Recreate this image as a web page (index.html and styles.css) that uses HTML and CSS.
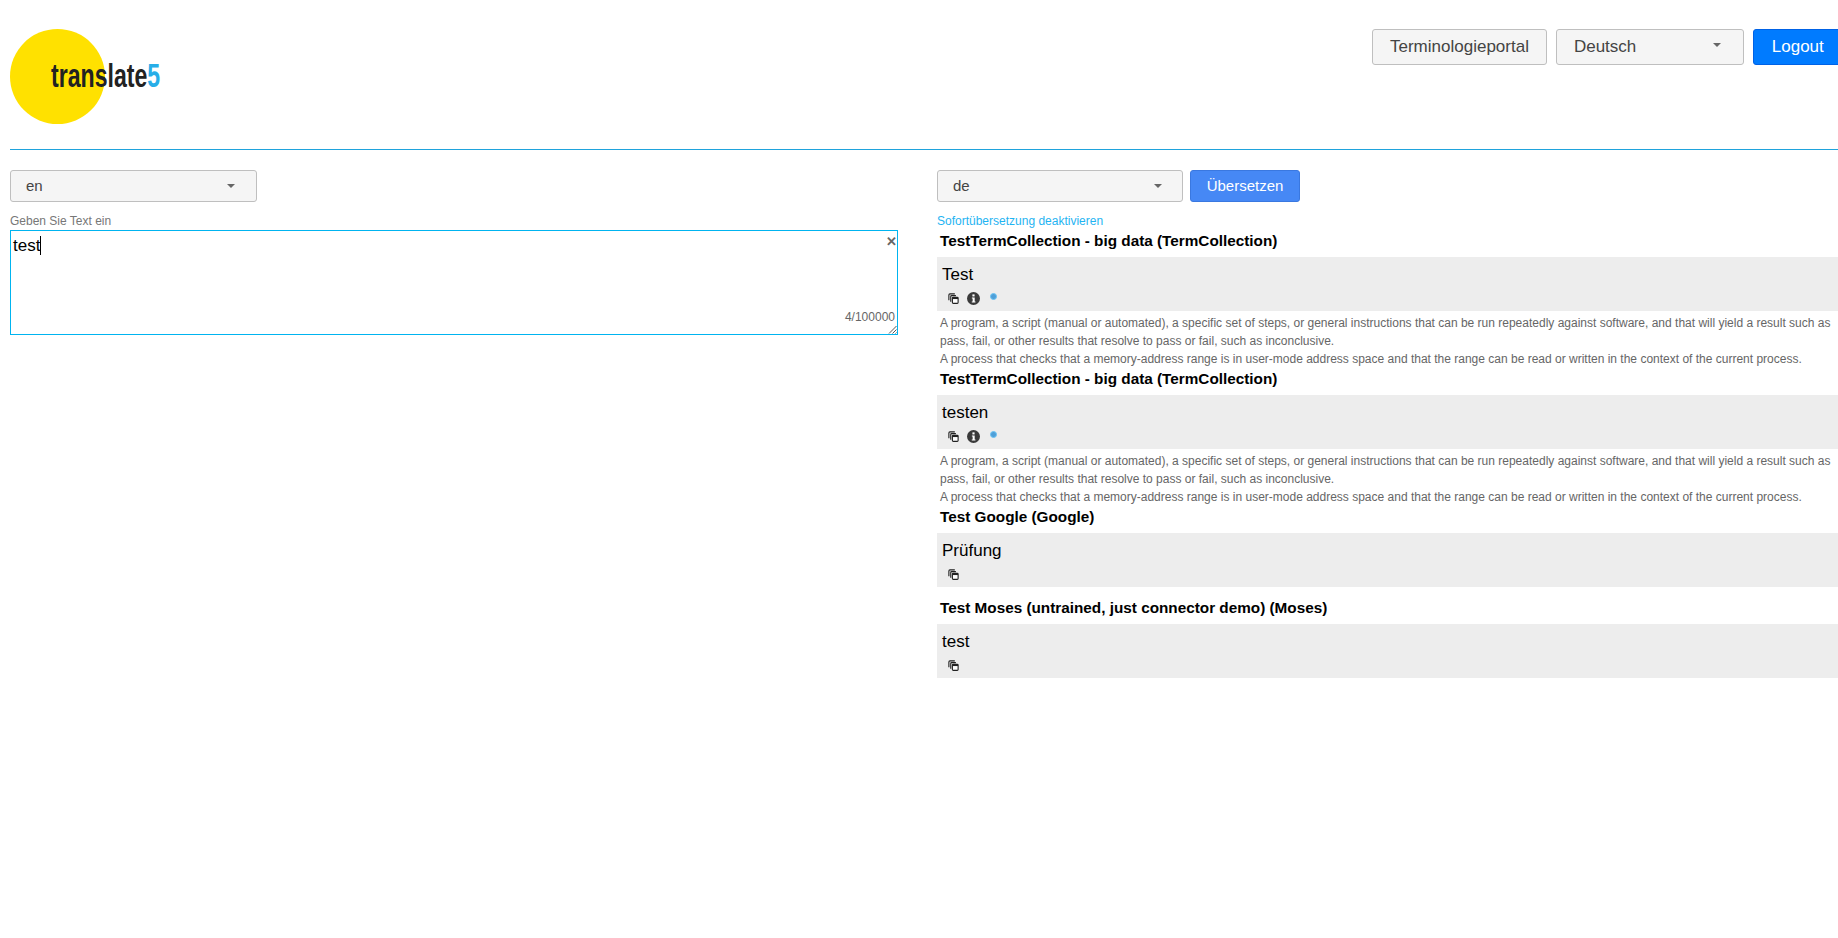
FILE: index.html
```html
<!DOCTYPE html>
<html lang="de">
<head>
<meta charset="utf-8">
<title>translate5</title>
<link rel="stylesheet" href="styles.css">
</head>
<body>
<svg class="defs" width="0" height="0" aria-hidden="true">
  <symbol id="copy" viewBox="0 0 10 10">
    <path d="M.8 6.6V1.8C.8 1.2 1.2.8 1.8.8h4.4" fill="none" stroke="#222" stroke-width="1"/>
    <path d="M2.5 8V3.2c0-.5.3-.8.8-.8h3.9" fill="none" stroke="#222" stroke-width="1"/>
    <rect x="4" y="4" width="5.2" height="5.4" rx=".8" fill="#fff" stroke="#222" stroke-width="1"/>
    <rect x="4" y="4" width="5.2" height="1.5" fill="#222"/>
  </symbol>
  <symbol id="info" viewBox="0 0 12 12">
    <circle cx="6" cy="6" r="6" fill="#3a3a3a"/>
    <rect x="5" y="2.2" width="2" height="1.9" fill="#fff"/>
    <path d="M4.5 5h2.6v3.7h.7v1H4.4v-1h.8V6h-.7z" fill="#fff"/>
  </symbol>
</svg>
<header class="top">
  <div class="logo">
    <span class="logo-circle"></span>
    <span class="logo-text">translate<span class="logo-five">5</span></span>
  </div>
  <nav class="top-actions">
    <button class="btn btn-plain btn-large">Terminologieportal</button>
    <button class="btn btn-plain btn-large select-lang"><span>Deutsch</span><i class="caret"></i></button>
    <button class="btn btn-primary btn-large">Logout</button>
  </nav>
</header>
<main class="columns">
  <section class="col-left">
    <button class="btn btn-plain select-small"><span>en</span><i class="caret"></i></button>
    <div class="hint">Geben Sie Text ein</div>
    <div class="source">
      <div class="source-text">test<span class="cursor"></span></div>
      <span class="clear">✕</span>
      <span class="counter">4/100000</span>
      <svg class="grip" width="9" height="9" viewBox="0 0 9 9"><path d="M1 8.5 8.5 1M4.5 8.5l4-4M7.5 8.5l1-1" stroke="#555" stroke-width="1" fill="none"/></svg>
    </div>
  </section>
  <section class="col-right">
    <div class="target-bar">
      <button class="btn btn-plain select-small select-target"><span>de</span><i class="caret"></i></button>
      <button class="btn btn-translate">Übersetzen</button>
    </div>
    <a class="instant">Sofortübersetzung deaktivieren</a>
    <div class="result">
      <h3 class="res-title">TestTermCollection - big data (TermCollection)</h3>
      <div class="res-box">
        <div class="res-term">Test</div>
        <div class="res-icons"><svg class="ic-copy"><use href="#copy"/></svg><svg class="ic-info"><use href="#info"/></svg><span class="ic-dot"></span></div>
      </div>
      <p class="res-desc">A program, a script (manual or automated), a specific set of steps, or general instructions that can be run repeatedly against software, and that will yield a result such as pass, fail, or other results that resolve to pass or fail, such as inconclusive.<br>A process that checks that a memory-address range is in user-mode address space and that the range can be read or written in the context of the current process.</p>
    </div>
    <div class="result">
      <h3 class="res-title">TestTermCollection - big data (TermCollection)</h3>
      <div class="res-box">
        <div class="res-term">testen</div>
        <div class="res-icons"><svg class="ic-copy"><use href="#copy"/></svg><svg class="ic-info"><use href="#info"/></svg><span class="ic-dot"></span></div>
      </div>
      <p class="res-desc">A program, a script (manual or automated), a specific set of steps, or general instructions that can be run repeatedly against software, and that will yield a result such as pass, fail, or other results that resolve to pass or fail, such as inconclusive.<br>A process that checks that a memory-address range is in user-mode address space and that the range can be read or written in the context of the current process.</p>
    </div>
    <div class="result">
      <h3 class="res-title">Test Google (Google)</h3>
      <div class="res-box">
        <div class="res-term">Prüfung</div>
        <div class="res-icons"><svg class="ic-copy"><use href="#copy"/></svg></div>
      </div>
    </div>
    <div class="result spaced">
      <h3 class="res-title">Test Moses (untrained, just connector demo) (Moses)</h3>
      <div class="res-box">
        <div class="res-term">test</div>
        <div class="res-icons"><svg class="ic-copy"><use href="#copy"/></svg></div>
      </div>
    </div>
  </section>
</main>
</body>
</html>
```
FILE: styles.css
```css
* { box-sizing: border-box; }
html, body { height: 100%; }
body {
  margin: 0;
  padding: 0 0 0 10px;
  width: 1838px;
  overflow: hidden;
  background: #fff;
  font-family: "Liberation Sans", Arial, sans-serif;
  color: #000;
}
.defs { display: block; height: 0; }
.top {
  width: 1860px;
  height: 150px;
  padding-top: 29px;
  border-bottom: 1px solid #1fa3dc;
  display: flex;
  justify-content: space-between;
  align-items: flex-start;
}
.logo { position: relative; width: 160px; height: 95px; }
.logo-circle {
  display: block;
  width: 95px;
  height: 95px;
  border-radius: 50%;
  background: #ffe100;
}
.logo-text {
  position: absolute;
  left: 41px;
  top: 29px;
  font-size: 33px;
  font-weight: bold;
  line-height: 36px;
  color: #222;
  transform: scaleX(.7);
  transform-origin: left center;
  white-space: nowrap;
}
.logo-five { color: #27aee8; }
.top-actions { display: flex; gap: 9px; width: 498px; }
.btn {
  font-family: inherit;
  border-radius: 3px;
  cursor: pointer;
  padding: 0;
}
.btn-plain {
  background: #f5f5f5;
  border: 1px solid #bfbfbf;
  color: #444;
}
.btn-primary {
  background: #007bff;
  border: 1px solid #0062e6;
  color: #fff;
}
.btn-large { height: 36px; font-size: 17px; padding: 0 17px; }
.select-lang {
  width: 189px;
  display: flex;
  align-items: center;
  justify-content: space-between;
  padding-right: 22px;
}
.btn-primary.btn-large { width: 118px; text-align: left; padding: 0 0 0 18px; }
.caret {
  width: 0;
  height: 0;
  margin-top: -4px;
  border-left: 4px solid transparent;
  border-right: 4px solid transparent;
  border-top: 4px solid #666;
}
.columns { display: flex; padding-top: 20px; }
.col-left { width: 927px; flex: none; }
.col-right { width: 960px; flex: none; }
.select-small {
  width: 247px;
  height: 32px;
  font-size: 15px;
  display: flex;
  align-items: center;
  justify-content: space-between;
  padding: 0 21px 0 15px;
}
.select-small span { margin-bottom: 2px; }
.select-small .caret { margin-top: -1px; }
.select-target { width: 246px; padding-right: 20px; }
.hint {
  margin-top: 12px;
  height: 16px;
  font-size: 12px;
  line-height: 14px;
  color: #777;
}
.source {
  position: relative;
  width: 888px;
  height: 105px;
  border: 1px solid #00b4f0;
}
.source-text { padding: 5px 2px 0; font-size: 17px; line-height: 20px; color: #000; }
.cursor {
  display: inline-block;
  width: 1px;
  height: 19px;
  background: #000;
  vertical-align: -4px;
}
.clear { position: absolute; right: 0; top: 3px; font-size: 13px; line-height: 16px; font-weight: bold; color: #666; }
.counter { position: absolute; right: 2px; bottom: 10px; font-size: 12px; line-height: 14px; color: #666; }
.grip { position: absolute; right: 0; bottom: 0; }
.target-bar { display: flex; gap: 7px; }
.btn-translate {
  width: 110px;
  height: 32px;
  padding-bottom: 2px;
  background: #4688f5;
  border: 1px solid #3a78e0;
  color: #fff;
  font-size: 15px;
}
.instant {
  display: block;
  margin-top: 12px;
  height: 18px;
  font-size: 12px;
  line-height: 14px;
  color: #1fb4f2;
}
.res-title {
  margin: 0;
  height: 25px;
  padding-left: 3px;
  font-size: 15.3px;
  line-height: 18px;
  font-weight: bold;
  color: #000;
}
.res-box { background: #ededed; height: 54px; padding: 6px 5px 0; }
.res-term { font-size: 17px; line-height: 24px; }
.res-icons { display: flex; align-items: center; gap: 8px; height: 18px; padding-left: 6px; margin-top: 2px; }
.ic-copy { width: 11px; height: 11px; }
.ic-info { width: 13px; height: 13px; }
.ic-dot {
  width: 7px;
  height: 7px;
  margin: -4px 0 0 2px;
  border-radius: 50%;
  background: #4f9fd8;
  border: 1px solid #6cc4f4;
}
.res-desc {
  margin: 0;
  width: 897px;
  padding: 3px 0 0 3px;
  font-size: 12px;
  line-height: 18px;
  color: #666;
  height: 59px;
}
.result.spaced { margin-top: 12px; }
```
